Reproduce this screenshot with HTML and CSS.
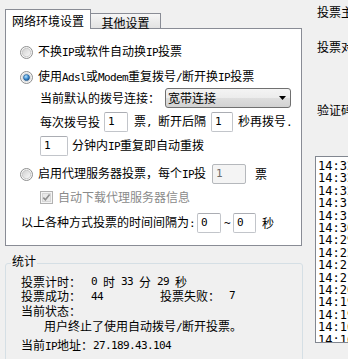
FILE: index.html
```html
<!DOCTYPE html>
<html lang="zh-CN">
<head>
<meta charset="utf-8">
<title>投票设置</title>
<link rel="stylesheet" href="styles.css">
</head>
<body>
<div class="win">
  <div class="left">
    <div class="tabs">
      <div class="tab active">网络环境设置</div>
      <div class="tab inactive">其他设置</div>
    </div>
    <div class="panel">
      <div class="row r1">
        <svg class="radio" width="13" height="13" viewBox="0 0 13 13"><defs><linearGradient id="ru1" x1="0" y1="0" x2="1" y2="1"><stop offset="0" stop-color="#cfcfcf"/><stop offset="1" stop-color="#fbfbfb"/></linearGradient></defs><circle cx="6.5" cy="6.5" r="6" fill="#f6f6f6" stroke="#8e8f8f"/><circle cx="6.5" cy="6.5" r="4.2" fill="url(#ru1)" stroke="#bdbdbd" stroke-width=".7"/></svg>
        <span class="lbl">不换<span class="en">IP</span>或软件自动换<span class="en">IP</span>投票</span>
      </div>
      <div class="row r2">
        <svg class="radio" width="13" height="13" viewBox="0 0 13 13"><defs><radialGradient id="rb" cx="0.4" cy="0.35" r="0.7"><stop offset="0" stop-color="#b6e2fb"/><stop offset="0.55" stop-color="#3f8fd4"/><stop offset="1" stop-color="#154d86"/></radialGradient></defs><circle cx="6.5" cy="6.5" r="6" fill="#f6f6f6" stroke="#8e8f8f"/><circle cx="6.5" cy="6.5" r="4.2" fill="#ffffff" stroke="#c9c9c9" stroke-width=".6"/><circle cx="6.5" cy="6.5" r="3.1" fill="url(#rb)" stroke="#1d4f7f" stroke-width=".6"/></svg>
        <span class="lbl">使用<span class="en">Adsl</span>或<span class="en">Modem</span>重复拨号<span class="en">/</span>断开换<span class="en">IP</span>投票</span>
      </div>
      <div class="row r3 ind">
        <span class="lbl">当前默认的拨号连接：</span>
        <div class="combo"><span class="combo-text">宽带连接</span><svg class="arrow" width="7" height="4" viewBox="0 0 7 4"><path d="M0 0H7L3.5 4Z" fill="#000"/></svg></div>
      </div>
      <div class="row r4 ind">
        <span class="lbl">每次拨号投</span>
        <span class="tb w24 m-a"><span class="en">1</span></span>
        <span class="lbl">票<span class="en">, </span>断开后隔</span>
        <span class="tb w22 m-b"><span class="en">1</span></span>
        <span class="lbl">秒再拨号<span class="en">.</span></span>
      </div>
      <div class="row r5 ind">
        <span class="tb w28 m-c"><span class="en">1</span></span>
        <span class="lbl">分钟内<span class="en">IP</span>重复即自动重拨</span>
      </div>
      <div class="row r6">
        <svg class="radio" width="13" height="13" viewBox="0 0 13 13"><defs><linearGradient id="ru3" x1="0" y1="0" x2="1" y2="1"><stop offset="0" stop-color="#cfcfcf"/><stop offset="1" stop-color="#fbfbfb"/></linearGradient></defs><circle cx="6.5" cy="6.5" r="6" fill="#f6f6f6" stroke="#8e8f8f"/><circle cx="6.5" cy="6.5" r="4.2" fill="url(#ru3)" stroke="#bdbdbd" stroke-width=".7"/></svg>
        <span class="lbl">启用代理服务器投票，每个<span class="en">IP</span>投</span>
        <span class="tb disabled w34 m-d"><span class="en">1</span></span>
        <span class="lbl">票</span>
      </div>
      <div class="row r7 ind">
        <svg class="check" width="13" height="13" viewBox="0 0 13 13"><rect x="0.5" y="0.5" width="12" height="12" fill="#f4f4f4" stroke="#b1b1b1"/><rect x="2.5" y="2.5" width="8" height="8" fill="#e9e9e9" stroke="#d6d6d6"/><path d="M3.3 6.6L5.4 8.8L9.6 3.6" fill="none" stroke="#8f8f8f" stroke-width="1.6"/></svg>
        <span class="lbl gray">自动下载代理服务器信息</span>
      </div>
      <div class="row r8">
        <span class="lbl">以上各种方式投票的时间间隔为<span class="en">:</span></span>
        <span class="tb w24 m-e"><span class="en">0</span></span>
        <span class="lbl"><span class="en">~</span></span>
        <span class="tb w23 m-f"><span class="en">0</span></span>
        <span class="lbl">秒</span>
      </div>
    </div>
    <div class="group">
      <div class="legend">统计</div>
      <div class="srow s1"><span class="sl">投票计时：</span><span class="en">0 </span>时<span class="en"> 33 </span>分<span class="en"> 29 </span>秒</div>
      <div class="srow s2"><span class="sl">投票成功：</span><span class="sv"><span class="en">44</span></span><span class="sl2">投票失败：</span><span class="en">7</span></div>
      <div class="srow s3"><span>当前状态：</span></div>
      <div class="srow s4"><span>用户终止了使用自动拨号<span class="en">/</span>断开投票。</span></div>
      <div class="srow s5"><span class="sl3">当前<span class="en">IP</span>地址：</span><span class="en">27.189.43.104</span></div>
    </div>
  </div>
  <div class="right">
    <div class="rt t1">投票主题：</div>
    <div class="rt t2">投票对象：</div>
    <div class="rt t3">验证码：</div>
    <div class="list">
      <div>14:32:51 投票成功</div>
      <div>14:32:20 投票成功</div>
      <div>14:32:02 投票成功</div>
      <div>14:31:40 投票成功</div>
      <div>14:31:12 投票成功</div>
      <div>14:30:45 投票成功</div>
      <div>14:29:58 投票成功</div>
      <div>14:25:33 投票成功</div>
      <div>14:21:47 投票成功</div>
      <div>14:21:09 投票成功</div>
      <div>14:20:36 投票成功</div>
      <div>14:19:52 投票成功</div>
      <div>14:19:14 投票成功</div>
      <div>14:16:40 投票成功</div>
      <div>14:16:02 投票成功</div>
    </div>
  </div>
</div>
</body>
</html>
```
FILE: styles.css
```css
* { box-sizing: border-box; }
html, body { margin: 0; padding: 0; }
body {
  width: 348px;
  height: 359px;
  overflow: hidden;
  background: #f0f0f0;
  font-family: "Noto Sans CJK SC", "Noto Sans", sans-serif;
  font-size: 12px;
  line-height: 16px;
  color: #000;
}
.win { display: flex; height: 359px; }
.left { width: 302px; flex: none; padding-left: 5px; }
.right { flex: 1; min-width: 0; overflow: hidden; white-space: nowrap; padding-left: 15px; }

.en {
  font-family: "DejaVu Sans Mono", monospace;
  font-size: 11px;
  letter-spacing: -0.62px;
  white-space: pre;
}

/* tabs */
.tabs { display: flex; align-items: flex-end; height: 28px; padding-top: 9px; position: relative; z-index: 1; }
.tab { border: 1px solid #898c95; border-bottom: none; text-align: center; white-space: nowrap; }
.tab.active { width: 86px; height: 20px; margin-bottom: -1px; background: #fff; line-height: 20px; padding-top: 1px; }
.tab.inactive { width: 71px; height: 15px; margin-left: -1px; background: linear-gradient(#f6f6f6, #e2e2e2); line-height: 16px; padding-top: 1px; }

/* panel */
.panel {
  width: 297px;
  height: 218px;
  border: 1px solid #898c95;
  background: #fff;
  padding-left: 14px;
}
.row { display: flex; align-items: center; height: 20px; white-space: nowrap; }
.ind { padding-left: 20px; }
.r1 { margin-top: 13px; }
.r2 { margin-top: 5px; }
.r3 { margin-top: 1px; }
.r4 { margin-top: 4px; }
.r5 { margin-top: 4px; }
.r6 { margin-top: 8px; }
.r7 { margin-top: 3px; }
.r8 { margin-top: 6px; padding-left: 1px; }
.radio { flex: none; margin-right: 5px; }
.check { flex: none; margin-right: 5px; }
.gray { color: #8a8a8a; }

.combo {
  width: 126px;
  height: 20px;
  margin-left: 5px;
  border: 1px solid #707070;
  border-radius: 3px;
  background: linear-gradient(#f4f4f4 0%, #ececec 50%, #dedede 51%, #d2d2d2 100%);
  display: flex;
  align-items: center;
  justify-content: space-between;
  padding: 0 4px 0 2px;
}
.arrow { flex: none; }

.tb {
  display: flex;
  align-items: center;
  height: 20px;
  border: 1px solid #c2c5ca;
  border-top-color: #abadb3;
  border-radius: 2px;
  background: #fff;
  padding-left: 3px;
  flex: none;
}
.tb.disabled { background: #f4f4f4; border-color: #b5b8bc; color: #6d6d6d; }
.w22 { width: 22px; }
.w23 { width: 23px; }
.w24 { width: 24px; }
.w28 { width: 28px; }
.w34 { width: 34px; }
.m-a { margin: 0 6px 0 4px; }
.m-b { margin: 0 5px 0 5px; }
.m-c { margin: 0 4px 0 0; }
.m-d { margin: 0 9px 0 6px; }
.m-e { margin: 0 3px 0 2px; }
.m-f { margin: 0 6px 0 3px; }

/* stats group */
.group {
  position: relative;
  width: 298px;
  height: 120px;
  margin-top: 17px;
  border: 1px solid #d5dfe5;
  border-radius: 3px;
  padding: 11px 0 0 15px;
}
.legend {
  position: absolute;
  top: -10px;
  left: 5px;
  padding: 0 1px;
  line-height: 14px;
  background: #f0f0f0;
}
.srow { line-height: 14px; height: 14px; white-space: nowrap; display: flex; align-items: center; }
.s2 { margin-top: 0; }
.s3 { margin-top: 1px; }
.s4 { margin-top: 2px; padding-left: 23px; }
.s5 { margin-top: 5px; }
.sl { display: inline-block; width: 70px; }
.sv { display: inline-block; width: 69px; }
.sl2 { display: inline-block; width: 69px; }
.sl3 { display: inline-block; width: 72px; }

/* right side */
.rt { line-height: 16px; }
.t1 { margin-top: 4px; }
.t2 { margin-top: 19px; }
.t3 { margin-top: 47px; }
.list {
  margin-top: 38px;
  margin-left: -2px;
  height: 187px;
  width: 60px;
  border: 1px solid #828790;
  background: #fff;
  padding: 3px 0 0 2px;
  font-family: "DejaVu Sans Mono", monospace;
  font-size: 12px;
  line-height: 12.4px;
  overflow: hidden;
}
```
